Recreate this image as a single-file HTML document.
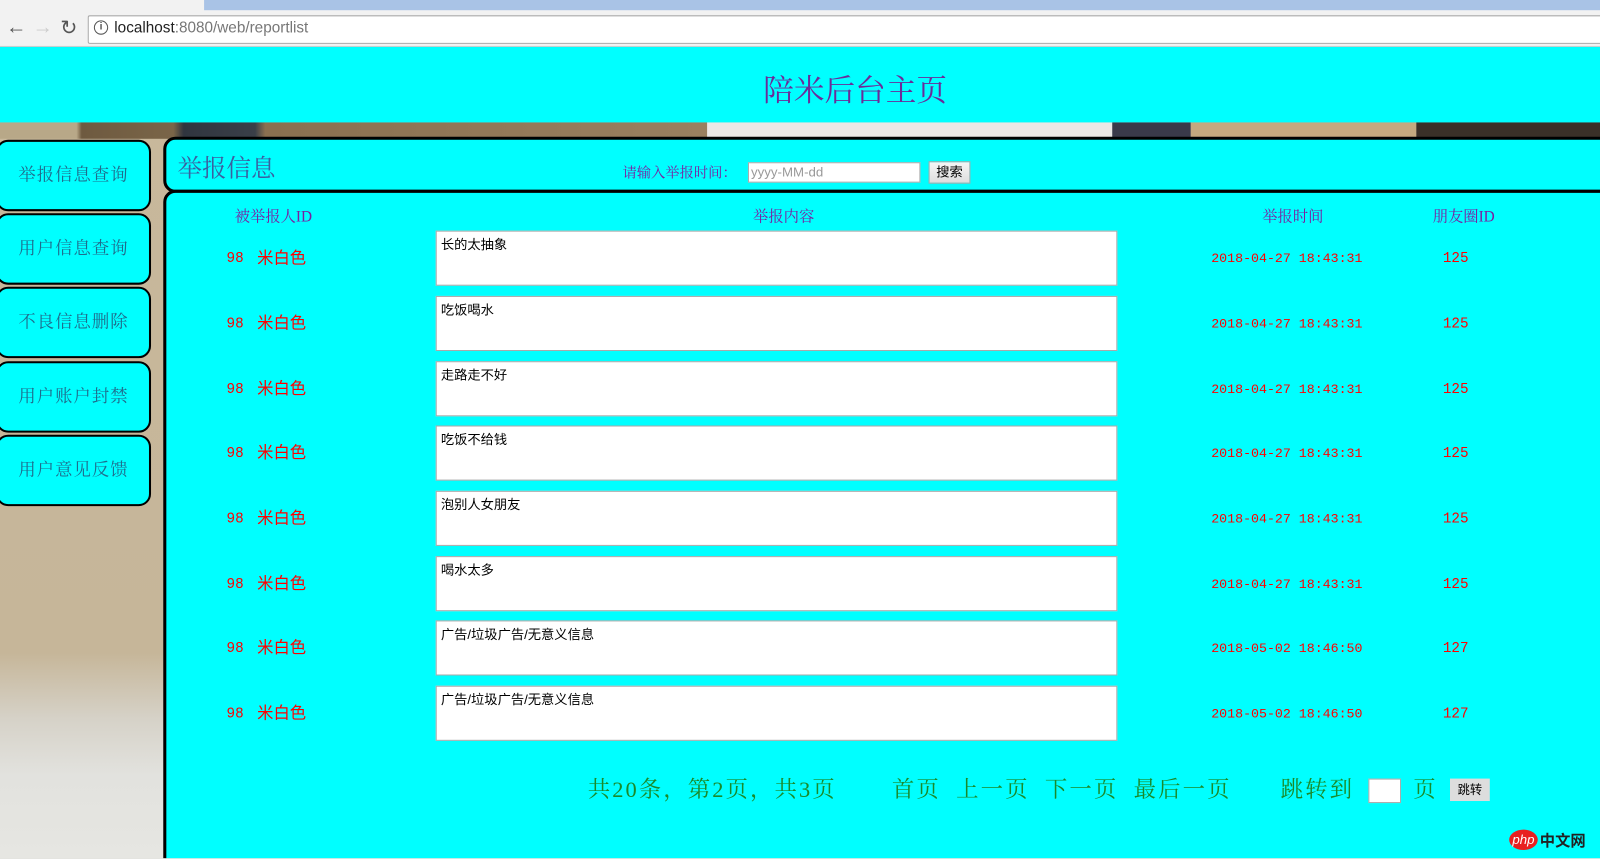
<!DOCTYPE html>
<html><head><meta charset="utf-8">
<style>
*{margin:0;padding:0;box-sizing:border-box}
html,body{width:1600px;height:859px;overflow:hidden}
body{position:relative;background:#e4e4e0}
#w{position:absolute;left:0;top:0;width:1568px;height:841px;transform:scale(1.020408);transform-origin:0 0;overflow:hidden;font-family:"Liberation Sans","Noto Sans CJK SC",sans-serif;background:linear-gradient(#c8b89c 0,#c6b699 640px,#d6d2c8 705px,#e2e2de 760px,#e6e6e2 841px)}
.a{position:absolute}
.cn{font-family:"Liberation Serif","Noto Serif CJK SC","Noto Sans CJK SC",serif}
.mono{font-family:"Liberation Mono","Noto Sans CJK SC",monospace}
.btn{position:absolute;left:-4px;width:152px;height:70px;background:#0ff;border:2px solid #000;border-radius:12px;color:#1f6c8c;font-size:17px;text-align:center;line-height:66px;letter-spacing:1px}
.row{position:absolute;left:0;width:1568px;height:54px}
.ta{position:absolute;left:427px;width:668px;height:54px;background:#fff;border:1px solid #a9a9a9;font-size:13px;padding:2px 4px;color:#000}
.r{color:#f00;font-size:14px;position:absolute;top:18px;line-height:20px}
.hd{position:absolute;top:201px;color:#7a1fa0;font-size:15px}
.pg{position:absolute;top:757px;font-size:22px;color:#1a8a2a;white-space:nowrap;letter-spacing:2px}
</style></head><body><div id="w">
<div class="a" style="left:0;top:0;width:1568px;height:12px;background:#a9c3e6"></div>
<div class="a" style="left:0;top:0;width:200px;height:12px;background:#f2f2f2"></div>
<div class="a" style="left:0;top:10px;width:1568px;height:36px;background:#f2f2f2;border-bottom:1px solid #ccc"></div>
<div class="a" style="left:6px;top:16px;font-size:20px;color:#555">&#8592;</div>
<div class="a" style="left:32px;top:16px;font-size:20px;color:#ccc">&#8594;</div>
<div class="a" style="left:59px;top:15px;font-size:20px;color:#555">&#8635;</div>
<div class="a" style="left:86px;top:15px;width:1500px;height:28px;background:#fff;border:1px solid #aaa;border-radius:2px"></div>
<div class="a" style="left:92px;top:20px;width:14px;height:14px;border:1.5px solid #555;border-radius:50%;font-size:10px;line-height:11px;text-align:center;color:#555;font-weight:bold">i</div>
<div class="a" style="left:112px;top:19px;font-size:15px;color:#222">localhost<span style="color:#777">:8080/web/reportlist</span></div>
<div class="a" style="left:0;top:46px;width:1568px;height:74px;background:#0ff"></div>
<div class="a cn" style="left:0;top:64px;width:1676px;text-align:center;font-size:30px;color:#6a2c9a">陪米后台主页</div>
<div class="a" style="left:0;top:120px;width:693px;height:16px;background:linear-gradient(90deg,#b8a888 0,#b8a888 75px,#6e5a40 80px,#7a6548 170px,#30353f 180px,#3a3f48 250px,#8a7050 260px,#9a8060 693px)"></div>
<div class="a" style="left:693px;top:120px;width:474px;height:16px;background:#ebe8e6"></div>
<div class="a" style="left:1090px;top:120px;width:77px;height:16px;background:#3a3a4a"></div>
<div class="a" style="left:1167px;top:120px;width:221px;height:16px;background:#c4a980"></div>
<div class="a" style="left:1388px;top:120px;width:212px;height:16px;background:#3a3028"></div>
<div class="btn cn" style="top:137px">举报信息查询</div>
<div class="btn cn" style="top:209px">用户信息查询</div>
<div class="btn cn" style="top:281px">不良信息删除</div>
<div class="btn cn" style="top:354px">用户账户封禁</div>
<div class="btn cn" style="top:426px">用户意见反馈</div>
<div class="a" style="left:160px;top:134px;width:1450px;height:55px;background:#0ff;border:3px solid #000;border-radius:12px"></div>
<div class="a cn" style="left:174px;top:145px;font-size:24px;color:#3a5fa0">举报信息</div>
<div class="a cn" style="left:610px;top:159px;font-size:14px;color:#7a1fa0">请输入举报时间：</div>
<div class="a" style="left:733px;top:159px;width:169px;height:20px;background:#fff;border:1px solid #aaa;font-size:13px;color:#999;padding-left:2px;line-height:18px">yyyy-MM-dd</div>
<div class="a" style="left:910px;top:158px;width:41px;height:22px;background:linear-gradient(#f6f6f6,#ddd);border:1px solid #aaa;font-size:13px;text-align:center;line-height:20px">搜索</div>
<div class="a" style="left:160px;top:186px;width:1450px;height:670px;background:#0ff;border:3px solid #000;border-radius:12px"></div>
<div class="hd cn" style="left:230px">被举报人ID</div>
<div class="hd cn" style="left:738px">举报内容</div>
<div class="hd cn" style="left:1237px">举报时间</div>
<div class="hd cn" style="left:1404px">朋友圈ID</div>

<div class="row" style="top:226px"><span class="r mono" style="left:222px">98</span><span class="r" style="left:252px;font-size:16px">米白色</span><div class="ta">长的太抽象</div><span class="r mono" style="left:1187px;font-size:13px">2018-04-27 18:43:31</span><span class="r mono" style="left:1414px">125</span></div>
<div class="row" style="top:290px"><span class="r mono" style="left:222px">98</span><span class="r" style="left:252px;font-size:16px">米白色</span><div class="ta">吃饭喝水</div><span class="r mono" style="left:1187px;font-size:13px">2018-04-27 18:43:31</span><span class="r mono" style="left:1414px">125</span></div>
<div class="row" style="top:354px"><span class="r mono" style="left:222px">98</span><span class="r" style="left:252px;font-size:16px">米白色</span><div class="ta">走路走不好</div><span class="r mono" style="left:1187px;font-size:13px">2018-04-27 18:43:31</span><span class="r mono" style="left:1414px">125</span></div>
<div class="row" style="top:417px"><span class="r mono" style="left:222px">98</span><span class="r" style="left:252px;font-size:16px">米白色</span><div class="ta">吃饭不给钱</div><span class="r mono" style="left:1187px;font-size:13px">2018-04-27 18:43:31</span><span class="r mono" style="left:1414px">125</span></div>
<div class="row" style="top:481px"><span class="r mono" style="left:222px">98</span><span class="r" style="left:252px;font-size:16px">米白色</span><div class="ta">泡别人女朋友</div><span class="r mono" style="left:1187px;font-size:13px">2018-04-27 18:43:31</span><span class="r mono" style="left:1414px">125</span></div>
<div class="row" style="top:545px"><span class="r mono" style="left:222px">98</span><span class="r" style="left:252px;font-size:16px">米白色</span><div class="ta">喝水太多</div><span class="r mono" style="left:1187px;font-size:13px">2018-04-27 18:43:31</span><span class="r mono" style="left:1414px">125</span></div>
<div class="row" style="top:608px"><span class="r mono" style="left:222px">98</span><span class="r" style="left:252px;font-size:16px">米白色</span><div class="ta">广告/垃圾广告/无意义信息</div><span class="r mono" style="left:1187px;font-size:13px">2018-05-02 18:46:50</span><span class="r mono" style="left:1414px">127</span></div>
<div class="row" style="top:672px"><span class="r mono" style="left:222px">98</span><span class="r" style="left:252px;font-size:16px">米白色</span><div class="ta">广告/垃圾广告/无意义信息</div><span class="r mono" style="left:1187px;font-size:13px">2018-05-02 18:46:50</span><span class="r mono" style="left:1414px">127</span></div>

<div class="pg cn" style="left:576px">共20条，第2页，共3页</div>
<div class="pg cn" style="left:874px">首页&nbsp;&nbsp;上一页&nbsp;&nbsp;下一页&nbsp;&nbsp;最后一页</div>
<div class="pg cn" style="left:1255px">跳转到</div>
<div class="a" style="left:1341px;top:763px;width:32px;height:24px;background:#fff;border:1px solid #aaa"></div>
<div class="pg cn" style="left:1385px">页</div>
<div class="a" style="left:1421px;top:763px;width:39px;height:22px;background:#ddd;font-size:12px;text-align:center;line-height:22px">跳转</div>
<div class="a" style="left:1479px;top:813px;width:28px;height:20px;background:#e82020;border-radius:50%;color:#fff;font-size:13px;text-align:center;line-height:19px;font-style:italic">php</div>
<div class="a" style="left:1509px;top:813px;font-size:15px;color:#222;font-weight:bold">中文网</div>
</div></body></html>
